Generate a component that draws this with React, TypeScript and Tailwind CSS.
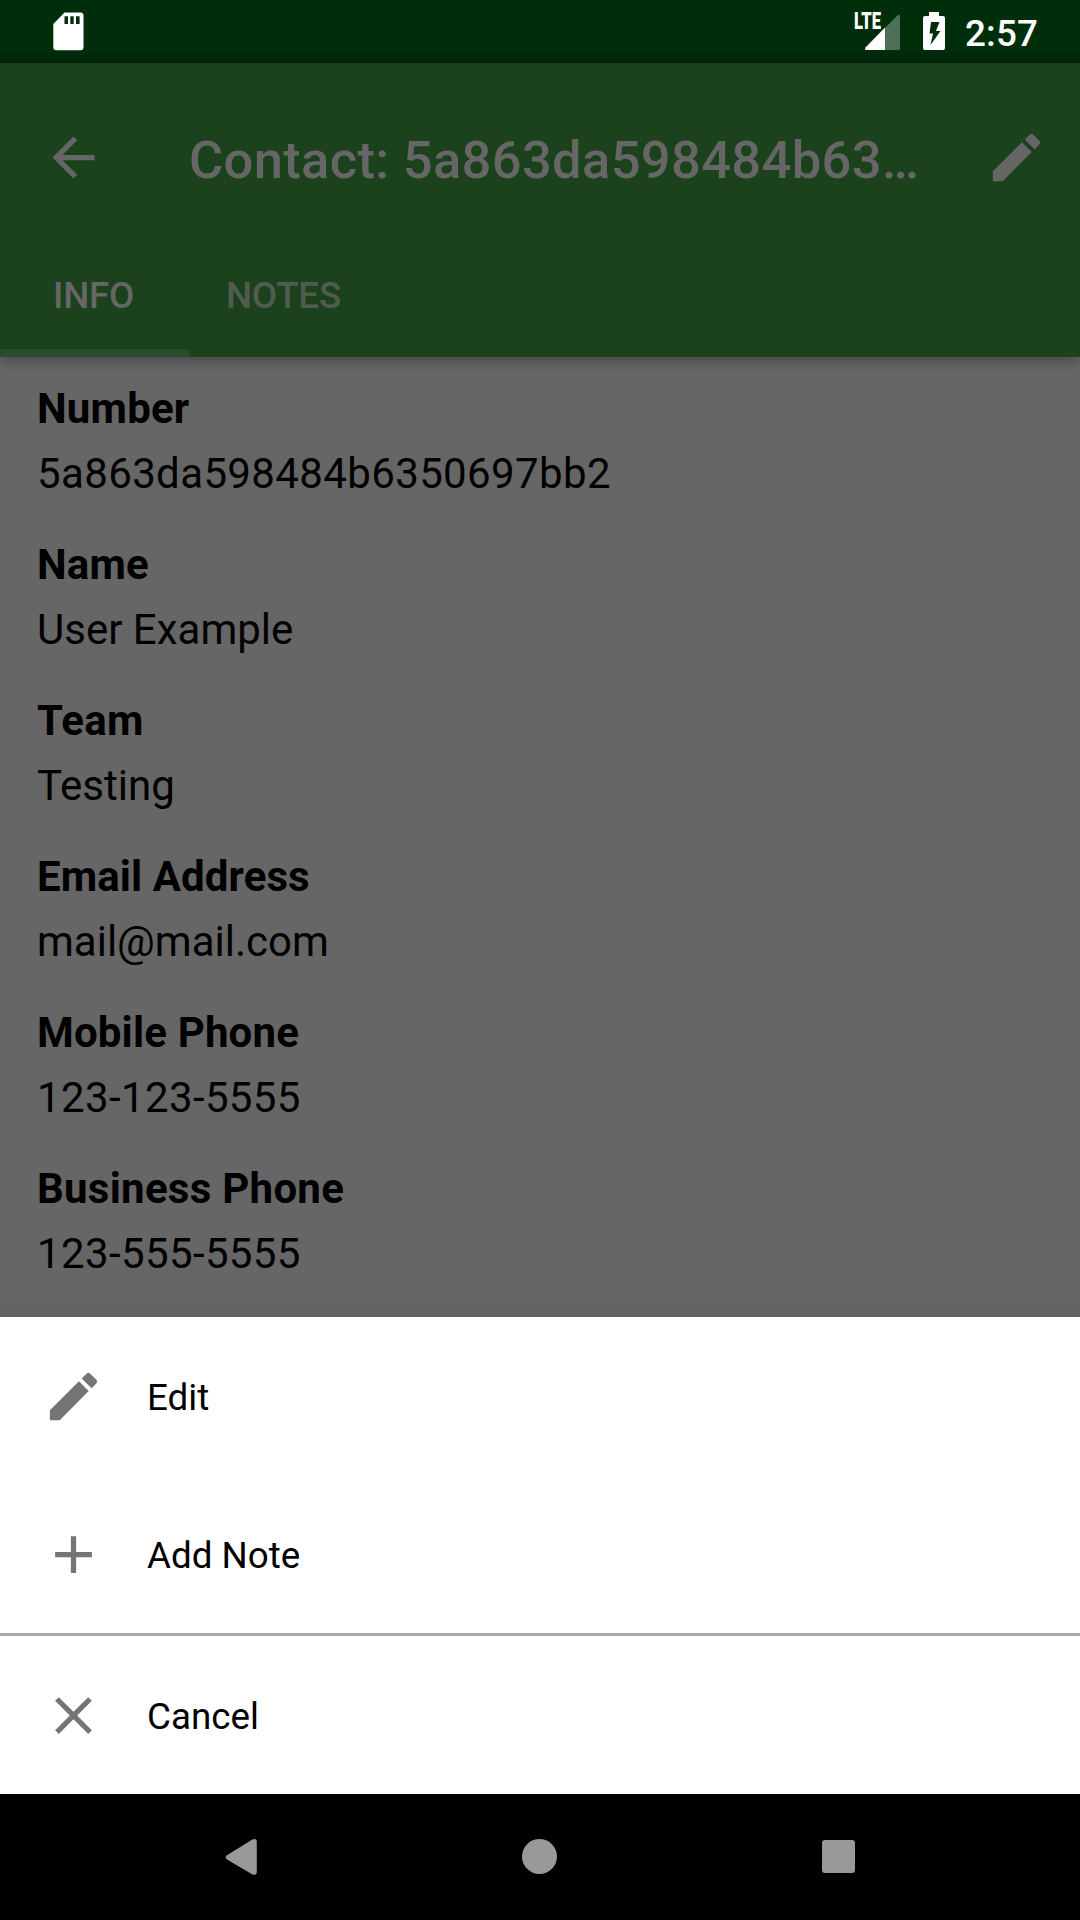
import React from "react";

const fields = [
  { label: "Number", value: "5a863da598484b6350697bb2", labelTracking: "tracking-[0.2px]", tracking: "tracking-[0.37px]" },
  { label: "Name", value: "User Example", labelTracking: "tracking-[0.2px]", tracking: "" },
  { label: "Team", value: "Testing", labelTracking: "tracking-[0.2px]", tracking: "" },
  { label: "Email Address", value: "mail@mail.com", labelTracking: "tracking-[0.1px]", tracking: "" },
  { label: "Mobile Phone", value: "123-123-5555", labelTracking: "tracking-[0.17px]", tracking: "tracking-[0.38px]" },
  { label: "Business Phone", value: "123-555-5555", labelTracking: "tracking-[0.27px]", tracking: "tracking-[0.38px]" },
];

const PENCIL =
  "M3 17.25V21h3.75L17.81 9.94l-3.75-3.75L3 17.25zM20.71 7.04c.39-.39.39-1.02 0-1.41l-2.34-2.34c-.39-.39-1.02-.39-1.41 0l-1.83 1.83 3.75 3.75 1.83-1.83z";
const BACK = "M20 11H7.83l5.59-5.59L12 4l-8 8 8 8 1.41-1.41L7.83 13H20v-2z";
const PLUS = "M19 13h-6v6h-2v-6H5v-2h6V5h2v6h6v2z";
const CLOSE =
  "M19 6.41L17.59 5 12 10.59 6.41 5 5 6.41 10.59 12 5 17.59 6.41 19 12 13.41 17.59 19 19 17.59 13.41 12z";

function Icon({ d, className }: { d: string; className: string }) {
  return (
    <svg viewBox="0 0 24 24" className={`size-[63px] shrink-0 ${className}`} fill="currentColor">
      <path d={d} />
    </svg>
  );
}

function StatusBar() {
  return (
    <div className="flex h-[63px] shrink-0 items-start bg-[linear-gradient(#002d0a_80%,#00260a)] text-white">
      <svg width="36" height="44" viewBox="0 0 36 44" className="mt-[10px] ml-[50px]">
        <path
          fill="currentColor"
          fillRule="evenodd"
          d="M14.5 2.5H30.5Q33.5 2.5 33.5 5.5V37.300Q33.500 40.300 30.500 40.300H6.300Q3.300 40.300 3.300 37.300V14ZM14.500 6.300V14H18V6.300ZM20.300 6.300V14H23.700V6.300ZM26 6.300V14H29.600V6.300Z"
        />
      </svg>
      <div className="relative ml-auto h-[52px] w-[52px]">
        <span className="absolute top-[12px] left-px origin-left scale-x-[0.72] text-[23px] leading-[20px] font-black">
          LTE
        </span>
        <svg width="52" height="52" viewBox="0 0 52 52" className="absolute inset-0">
          <path fill="#4f7058" d="M32 28L44 16Q47 13.500 47 16.500V48.500Q47 50 45.500 50H32Z" />
          <path fill="currentColor" d="M32 27.500V50H13Q11.500 50 12.500 47.500Z" />
        </svg>
      </div>
      <svg width="24" height="40" viewBox="0 0 24 40" className="mt-[11px] ml-[17px]">
        <path
          fill="currentColor"
          fillRule="evenodd"
          d="M7 1H17V5H21Q23 5 23 7V37Q23 39 21 39H3Q1 39 1 37V7Q1 5 3 5H7ZM9 11L7.500 22.500H11L8.500 34L18.500 20H14L17.500 11Z"
        />
      </svg>
      <span className="mt-[12px] ml-[19px] w-[115px] text-[36.75px] leading-[43px] font-medium tracking-[0.2px]">
        2:57
      </span>
    </div>
  );
}

function AppBar() {
  return (
    <header className="z-10 flex h-[294px] shrink-0 flex-col bg-[#1c411d] text-[#666] shadow-[0_4px_12px_rgba(0,0,0,0.3)]">
      <div className="flex h-[189px] items-center pr-[32px] pl-[42px]">
        <Icon d={BACK} className="" />
        <h1 className="mt-[5px] ml-[84px] text-[52.5px] leading-[62px] font-medium tracking-[0.33px] whitespace-nowrap">
          Contact: 5a863da598484b63…
        </h1>
        <Icon d={PENCIL} className="mb-px ml-auto" />
      </div>
      <nav className="flex h-[105px] text-[36.75px] leading-[43px] font-medium tracking-[-0.2px]">
        <div className="w-[189px] border-b-8 border-[#2b4c2c] pt-[22px] pl-[53px]">INFO</div>
        <div className="pt-[22px] pl-[37px] text-[#505c50]">NOTES</div>
      </nav>
    </header>
  );
}

function SheetRow({ d, label }: { d: string; label: string }) {
  return (
    <button className="flex h-[158px] w-full shrink-0 items-center gap-[42px] px-[42px] text-left">
      <Icon d={d} className="text-[#757575]" />
      <span className="pt-[2px] text-[36.75px] leading-[43px] text-black">{label}</span>
    </button>
  );
}

export default function App() {
  return (
    <div className="flex h-[1920px] w-[1080px] flex-col overflow-hidden bg-[#666] font-['Roboto',sans-serif]">
      <StatusBar />
      <AppBar />
      <main className="h-[960px] shrink-0 bg-[linear-gradient(#666_98%,#616161)] px-[37px] pt-[27px] text-[42px] leading-[49px] text-black">
        {fields.map((f) => (
          <section key={f.label} className="mb-[42px] flex flex-col gap-4">
            <h2 className={`font-bold ${f.labelTracking}`}>{f.label}</h2>
            <p className={f.tracking}>{f.value}</p>
          </section>
        ))}
      </main>
      <div className="flex h-[477px] shrink-0 flex-col bg-white">
        <SheetRow d={PENCIL} label="Edit" />
        <SheetRow d={PLUS} label="Add Note" />
        <div className="h-[3px] shrink-0 bg-[#aaa]" />
        <SheetRow d={CLOSE} label="Cancel" />
      </div>
      <div className="flex h-[126px] shrink-0 items-center bg-black text-[#999]">
        <svg width="34" height="40" viewBox="0 0 34 40" className="ml-[224px]">
          <path
            fill="currentColor"
            d="M3 18.200L27.500 3Q32.800 0.500 32.800 5V35Q32.800 39 28 37.300L3 22.500Q0.500 20.300 3 18.200Z"
          />
        </svg>
        <div className="mb-px ml-[264px] size-[35px] rounded-full bg-[#999]" />
        <div className="mb-px ml-[264.5px] size-[33px] rounded-[3px] bg-[#999]" />
      </div>
    </div>
  );
}
